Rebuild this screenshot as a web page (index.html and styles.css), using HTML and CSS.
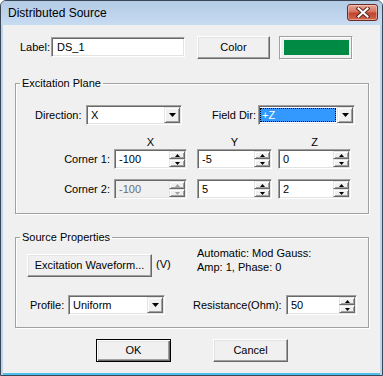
FILE: index.html
```html
<!DOCTYPE html>
<html>
<head>
<meta charset="utf-8">
<link rel="stylesheet" href="styles.css">
</head>
<body>
<div class="window">
  <div class="titlebar">
    <span class="title">Distributed Source</span>
    <div class="close">
      <svg width="14" height="11" viewBox="0 0 14 11">
        <path d="M2.5 1.5 L11.5 9.5 M11.5 1.5 L2.5 9.5" stroke="#5a2a24" stroke-width="4" stroke-linecap="square"/>
        <path d="M2.5 1.5 L11.5 9.5 M11.5 1.5 L2.5 9.5" stroke="#ffffff" stroke-width="2" stroke-linecap="square"/>
      </svg>
    </div>
  </div>
  <div class="client">
    <div class="row-top">
      <span class="lbl lbl-label">Label:</span>
      <div class="field edit w-label"><span class="field-text">DS_1</span></div>
      <div class="btn btn-color">Color</div>
      <div class="swatch"><div class="swatch-fill"></div></div>
    </div>

    <fieldset class="group group-plane">
      <legend>Excitation Plane</legend>
      <div class="dir-row">
        <span class="lbl lbl-dir">Direction:</span>
        <div class="field combo w-dir">
          <span class="field-text">X</span>
          <span class="raised combo-btn"><svg width="7" height="4" viewBox="0 0 7 4"><polygon points="0,0 7,0 3.5,4" fill="#000"/></svg></span>
        </div>
        <span class="lbl lbl-field">Field Dir:</span>
        <div class="field combo w-field">
          <span class="field-text sel">+Z</span>
          <span class="raised combo-btn"><svg width="7" height="4" viewBox="0 0 7 4"><polygon points="0,0 7,0 3.5,4" fill="#000"/></svg></span>
        </div>
      </div>
      <div class="corner-grid">
        <span></span>
        <span class="axis w73">X</span>
        <span class="axis w75">Y</span>
        <span class="axis w73">Z</span>

        <span class="corner-lbl">Corner 1:</span>
        <div class="field spin w73">
          <span class="field-text">-100</span>
          <span class="spin-btns">
            <span class="raised sb"><svg width="5" height="3" viewBox="0 0 5 3"><polygon points="2.5,0 5,3 0,3" fill="#000"/></svg></span>
            <span class="raised sb"><svg width="5" height="3" viewBox="0 0 5 3"><polygon points="0,0 5,0 2.5,3" fill="#000"/></svg></span>
          </span>
        </div>
        <div class="field spin w75">
          <span class="field-text">-5</span>
          <span class="spin-btns">
            <span class="raised sb"><svg width="5" height="3" viewBox="0 0 5 3"><polygon points="2.5,0 5,3 0,3" fill="#000"/></svg></span>
            <span class="raised sb"><svg width="5" height="3" viewBox="0 0 5 3"><polygon points="0,0 5,0 2.5,3" fill="#000"/></svg></span>
          </span>
        </div>
        <div class="field spin w73">
          <span class="field-text">0</span>
          <span class="spin-btns">
            <span class="raised sb"><svg width="5" height="3" viewBox="0 0 5 3"><polygon points="2.5,0 5,3 0,3" fill="#000"/></svg></span>
            <span class="raised sb"><svg width="5" height="3" viewBox="0 0 5 3"><polygon points="0,0 5,0 2.5,3" fill="#000"/></svg></span>
          </span>
        </div>

        <span class="corner-lbl">Corner 2:</span>
        <div class="field spin w73 disabled">
          <span class="field-text">-100</span>
          <span class="spin-btns">
            <span class="raised sb"><svg width="5" height="3" viewBox="0 0 5 3"><polygon points="2.5,0 5,3 0,3" fill="#a0a0a0"/></svg></span>
            <span class="raised sb"><svg width="5" height="3" viewBox="0 0 5 3"><polygon points="0,0 5,0 2.5,3" fill="#a0a0a0"/></svg></span>
          </span>
        </div>
        <div class="field spin w75">
          <span class="field-text">5</span>
          <span class="spin-btns">
            <span class="raised sb"><svg width="5" height="3" viewBox="0 0 5 3"><polygon points="2.5,0 5,3 0,3" fill="#000"/></svg></span>
            <span class="raised sb"><svg width="5" height="3" viewBox="0 0 5 3"><polygon points="0,0 5,0 2.5,3" fill="#000"/></svg></span>
          </span>
        </div>
        <div class="field spin w73">
          <span class="field-text">2</span>
          <span class="spin-btns">
            <span class="raised sb"><svg width="5" height="3" viewBox="0 0 5 3"><polygon points="2.5,0 5,3 0,3" fill="#000"/></svg></span>
            <span class="raised sb"><svg width="5" height="3" viewBox="0 0 5 3"><polygon points="0,0 5,0 2.5,3" fill="#000"/></svg></span>
          </span>
        </div>
      </div>
    </fieldset>

    <fieldset class="group group-source">
      <legend>Source Properties</legend>
      <div class="src-row">
        <div class="btn btn-wave">Excitation Waveform...</div>
        <span class="unit">(V)</span>
        <div class="info">Automatic: Mod Gauss:<br>Amp: 1, Phase: 0</div>
      </div>
      <div class="prof-row">
        <span class="lbl lbl-profile">Profile:</span>
        <div class="field combo w-profile">
          <span class="field-text">Uniform</span>
          <span class="raised combo-btn"><svg width="7" height="4" viewBox="0 0 7 4"><polygon points="0,0 7,0 3.5,4" fill="#000"/></svg></span>
        </div>
        <span class="lbl lbl-res">Resistance(Ohm):</span>
        <div class="field spin w71">
          <span class="field-text">50</span>
          <span class="spin-btns">
            <span class="raised sb"><svg width="5" height="3" viewBox="0 0 5 3"><polygon points="2.5,0 5,3 0,3" fill="#000"/></svg></span>
            <span class="raised sb"><svg width="5" height="3" viewBox="0 0 5 3"><polygon points="0,0 5,0 2.5,3" fill="#000"/></svg></span>
          </span>
        </div>
      </div>
    </fieldset>

    <div class="actions">
      <div class="btn btn-ok">OK</div>
      <div class="btn btn-cancel">Cancel</div>
    </div>
  </div>
</div>
</body>
</html>
```

FILE: styles.css
```css
* { box-sizing: border-box; }

html, body {
  margin: 0;
  padding: 0;
  background: #ffffff;
}

body {
  font-family: "Liberation Sans", Arial, sans-serif;
  font-size: 11px;
  color: #000;
}

.window {
  width: 383px;
  height: 376px;
  border: 1px solid #3a4656;
  border-radius: 6px 6px 0 0;
  background: #bfd5ee;
  display: flex;
  flex-direction: column;
  overflow: hidden;
}

.titlebar {
  height: 24px;
  flex: none;
  display: flex;
  align-items: center;
  padding-left: 7px;
  background: linear-gradient(#b4cbe6, #c7dbf1);
}

.title {
  font-size: 12px;
  color: #000;
  line-height: 16px;
}

.close {
  margin-left: auto;
  margin-right: 4px;
  margin-top: -2px;
  width: 31px;
  height: 17px;
  border: 1px solid #6b2a22;
  border-radius: 3px;
  background: linear-gradient(#e8a595 0%, #d6735f 45%, #c2432d 55%, #cf6a4f 100%);
  box-shadow: inset 0 0 0 1px rgba(255,255,255,0.35);
  display: flex;
  align-items: center;
  justify-content: center;
}

.client {
  flex: 1;
  margin: 0 2px 2px 2px;
  background: #f0f0f0;
  box-shadow: 0 2px 0 #4fc0ea;
}

/* common label */
.lbl {
  display: block;
  line-height: 20px;
  white-space: nowrap;
}

/* sunken fields */
.field {
  height: 20px;
  background: #fff;
  border: 1px solid;
  border-color: #a0a0a0 #fff #fff #a0a0a0;
  box-shadow: inset 1px 1px 0 #696969, inset -1px -1px 0 #e3e3e3;
  padding: 1px;
  display: flex;
  align-items: stretch;
}

.field-text {
  flex: 1;
  line-height: 16px;
  padding-left: 3px;
  white-space: nowrap;
}

.raised {
  background: #f0f0f0;
  border: 1px solid;
  border-color: #e3e3e3 #696969 #696969 #e3e3e3;
  box-shadow: inset 1px 1px 0 #fff, inset -1px -1px 0 #a0a0a0;
  display: flex;
  align-items: center;
  justify-content: center;
}

.combo-btn {
  width: 16px;
  flex: none;
}

.combo-btn svg { display: block; }

.spin-btns {
  width: 16px;
  flex: none;
  display: flex;
  flex-direction: column;
}

.sb {
  flex: 1;
}

.sb svg { display: block; }

.disabled {
  background: #f0f0f0;
}

.disabled .field-text {
  color: #6d6d6d;
}

/* buttons */
.btn {
  height: 23px;
  background: #f0f0f0;
  border: 1px solid;
  border-color: #fff #696969 #696969 #fff;
  box-shadow: inset -1px -1px 0 #a0a0a0, inset 1px 1px 0 #e3e3e3;
  display: flex;
  align-items: center;
  justify-content: center;
  line-height: 13px;
  white-space: nowrap;
}

/* top row */
.row-top {
  display: flex;
  align-items: flex-start;
  margin: 11px 0 0 17px;
  height: 24px;
}

.lbl-label {
  width: 31px;
  margin-top: 1px;
}

.w-label {
  width: 134px;
  margin-top: 1px;
}

.w-label .field-text { padding-left: 4px; }

.btn-color {
  width: 73px;
  margin-left: 12px;
}

.swatch {
  width: 74px;
  height: 24px;
  margin-left: 9px;
  border: 1px solid;
  border-color: #a0a0a0 #fff #fff #a0a0a0;
  box-shadow: inset -1px -1px 0 #a0a0a0, inset 1px 1px 0 #fff;
  background: #f0f0f0;
  padding: 3px 3px 4px 4px;
}

.swatch-fill {
  width: 100%;
  height: 100%;
  background: #008a43;
}

/* group boxes */
.group {
  margin: 17px 0 0 12px;
  padding: 0;
  width: 354px;
  min-width: 0;
  border: 1px solid #a0a0a0;
  box-shadow: inset 1px 1px 0 #fff, 1px 1px 0 #fff;
}

.group legend {
  margin-left: 4px;
  padding: 0 2px;
  line-height: 13px;
}

.group-plane { height: 137px; }
.group-source { height: 97px; }

.dir-row {
  display: flex;
  align-items: flex-start;
  margin: 15px 0 0 19px;
}

.lbl-dir { width: 51px; }
.w-dir { width: 96px; }
.lbl-field { width: 46px; margin-left: 30px; }
.w-field { width: 97px; }

.sel {
  background: #3399ff;
  color: #fff;
  outline: 1px dotted #000;
  outline-offset: -1px;
  margin: 1px 1px 1px 0;
  line-height: 14px;
  padding-left: 2px;
}

.corner-grid {
  display: grid;
  grid-template-columns: 98px 83px 81px 73px;
  grid-template-rows: 13px 20px 30px;
  align-items: end;
  margin-top: 11px;
}

.axis {
  display: block;
  text-align: center;
  line-height: 13px;
}

.w73 { width: 73px; }
.w75 { width: 75px; }
.w71 { width: 71px; }

.corner-lbl {
  display: block;
  text-align: right;
  padding-right: 4px;
  line-height: 20px;
  white-space: nowrap;
}

/* source row */
.src-row {
  display: flex;
  align-items: flex-start;
  margin-left: 11px;
}

.btn-wave {
  width: 125px;
  margin-top: 10px;
}

.unit {
  display: block;
  width: 45px;
  margin-top: 14px;
  padding-left: 4px;
  line-height: 13px;
}

.info {
  margin-top: 2px;
  line-height: 14px;
}

.prof-row {
  display: flex;
  align-items: flex-start;
  margin: 18px 0 0 14px;
}

.lbl-profile { width: 38px; }
.w-profile { width: 97px; }
.lbl-res { width: 93px; margin-left: 28px; }

/* dialog buttons */
.actions {
  display: flex;
  margin: 11px 0 0 93px;
}

.btn-ok {
  width: 75px;
  border: 1px solid #000;
  box-shadow: inset 1px 1px 0 #fff, inset -1px -1px 0 #696969, inset -2px -2px 0 #a0a0a0, inset 2px 2px 0 #e3e3e3;
}

.btn-cancel {
  width: 75px;
  margin-left: 42px;
}
```
